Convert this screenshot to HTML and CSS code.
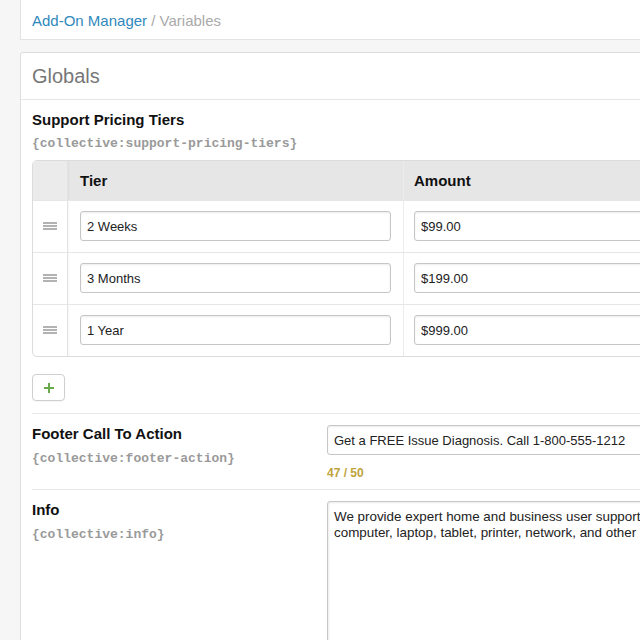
FILE: index.html
```html
<!DOCTYPE html>
<html>
<head>
<meta charset="utf-8">
<link rel="stylesheet" href="styles.css">
</head>
<body>
<div class="page">
  <div class="crumbs">
    <a class="crumb-link" href="#">Add-On Manager</a><span class="crumb-sep"> / Variables</span>
  </div>
  <div class="panel">
    <div class="panel-header">Globals</div>
    <div class="panel-body">
      <div class="var-label">Support Pricing Tiers</div>
      <div class="var-code">{collective:support-pricing-tiers}</div>
      <table class="grid">
        <thead>
          <tr>
            <th class="col-handle"></th>
            <th class="col-tier">Tier</th>
            <th class="col-amount">Amount</th>
          </tr>
        </thead>
        <tbody>
          <tr>
            <td class="col-handle"><span class="handle"><i></i><i></i><i></i></span></td>
            <td class="col-tier"><input class="text-input" type="text" value="2 Weeks"></td>
            <td class="col-amount"><input class="text-input" type="text" value="$99.00"></td>
          </tr>
          <tr>
            <td class="col-handle"><span class="handle"><i></i><i></i><i></i></span></td>
            <td class="col-tier"><input class="text-input" type="text" value="3 Months"></td>
            <td class="col-amount"><input class="text-input" type="text" value="$199.00"></td>
          </tr>
          <tr>
            <td class="col-handle"><span class="handle"><i></i><i></i><i></i></span></td>
            <td class="col-tier"><input class="text-input" type="text" value="1 Year"></td>
            <td class="col-amount"><input class="text-input" type="text" value="$999.00"></td>
          </tr>
        </tbody>
      </table>
      <button class="add-btn" type="button">
        <svg width="12" height="12" viewBox="0 0 12 12"><path d="M6 1v10M1 6h10" stroke="#6aaa4e" stroke-width="2" fill="none"/></svg>
      </button>

      <div class="field">
        <div class="field-meta">
          <div class="var-label">Footer Call To Action</div>
          <div class="var-code">{collective:footer-action}</div>
        </div>
        <div class="field-input">
          <input class="text-input wide" type="text" value="Get a FREE Issue Diagnosis. Call 1-800-555-1212">
          <div class="counter">47 / 50</div>
        </div>
      </div>

      <div class="field">
        <div class="field-meta">
          <div class="var-label">Info</div>
          <div class="var-code">{collective:info}</div>
        </div>
        <div class="field-input">
          <textarea class="text-area">We provide expert home and business user support for computer, laptop, tablet, printer, network, and other</textarea>
        </div>
      </div>
    </div>
  </div>
</div>
</body>
</html>
```

FILE: styles.css
```css
html, body {
  margin: 0;
  padding: 0;
  overflow: hidden;
}
body {
  background: #f6f6f6;
  font-family: "Liberation Sans", Arial, sans-serif;
  color: #111;
}
.page {
  padding-left: 20px;
  width: 700px;
}
.crumbs {
  background: #fff;
  border: 1px solid #e3e3e3;
  border-top: none;
  height: 39px;
  padding-left: 11px;
  font-size: 15px;
  line-height: 41px;
}
.crumb-link {
  color: #2f89bd;
  text-decoration: none;
}
.crumb-sep {
  color: #aaa;
}
.panel {
  margin-top: 12px;
  background: #fff;
  border: 1px solid #dedede;
  border-radius: 3px;
}
.panel-header {
  height: 46px;
  line-height: 46px;
  padding: 0 11px;
  font-size: 20px;
  color: #777;
  border-bottom: 1px solid #e6e6e6;
}
.panel-body {
  padding: 12px 11px 0;
}
.var-label {
  font-size: 15px;
  font-weight: bold;
  line-height: 16px;
  color: #111;
}
.var-code {
  margin-top: 7px;
  font-family: "Liberation Mono", "Courier New", monospace;
  font-size: 13px;
  font-weight: bold;
  line-height: 18px;
  color: #9a9a9a;
}
.grid {
  margin-top: 7px;
  width: 660px;
  border-collapse: separate;
  border-spacing: 0;
  border: 1px solid #dcdcdc;
  border-radius: 5px;
  overflow: hidden;
}
.grid th {
  height: 39px;
  padding: 0 12px;
  text-align: left;
  font-size: 15px;
  font-weight: bold;
  color: #111;
  background: #e6e6e6;
}
.grid th.col-handle {
  background: #ebebeb;
}
.grid td {
  padding: 10px 12px 11px;
  border-top: 1px solid #e6e6e6;
  vertical-align: middle;
}
.grid .col-handle {
  width: 34px;
  padding: 0;
  text-align: center;
  box-sizing: border-box;
}
.grid .col-tier {
  width: 311px;
  border-left: 1px solid #e3e3e3;
  box-shadow: inset 2px 0 2px -1px rgba(0, 0, 0, 0.04);
}
.grid .col-amount {
  border-left: 1px solid #ececec;
  padding-left: 10px;
}
.handle {
  display: inline-flex;
  flex-direction: column;
  gap: 1px;
  width: 14px;
  vertical-align: middle;
  margin-top: -3px;
}
.handle i {
  display: block;
  height: 2px;
  background: #b3b3b3;
}
.text-input {
  display: block;
  box-sizing: border-box;
  width: 100%;
  height: 30px;
  margin: 0;
  padding: 0 6px;
  border: 1px solid #c6c6c6;
  border-radius: 3px;
  box-shadow: inset 0 1px 2px rgba(0, 0, 0, 0.08);
  font-family: "Liberation Sans", Arial, sans-serif;
  font-size: 13px;
  color: #222;
  background: #fff;
}
.add-btn {
  display: flex;
  align-items: center;
  justify-content: center;
  margin-top: 17px;
  width: 33px;
  height: 27px;
  padding: 0;
  background: #fff;
  border: 1px solid #cfcfcf;
  border-radius: 4px;
  box-shadow: 0 1px 1px rgba(0, 0, 0, 0.04);
}
.field {
  display: grid;
  grid-template-columns: 295px 1fr;
  border-top: 1px solid #e8e8e8;
  margin-top: 12px;
  padding-top: 11px;
}
.field + .field {
  margin-top: 0;
}
.field-meta .var-label {
  margin-top: 1px;
}
.field-meta .var-code {
  margin-top: 8px;
}
.field-input {
  padding-bottom: 9px;
}
.counter {
  margin-top: 11px;
  font-size: 12px;
  font-weight: bold;
  line-height: 14px;
  color: #bea33c;
}
.text-area {
  display: block;
  box-sizing: border-box;
  width: 100%;
  height: 200px;
  margin: 0;
  padding: 7px 6px;
  border: 1px solid #c6c6c6;
  border-radius: 3px;
  box-shadow: inset 1px 1px 2px rgba(0, 0, 0, 0.08);
  font-family: "Liberation Sans", Arial, sans-serif;
  font-size: 13.4px;
  line-height: 16px;
  color: #222;
  resize: none;
}
```
